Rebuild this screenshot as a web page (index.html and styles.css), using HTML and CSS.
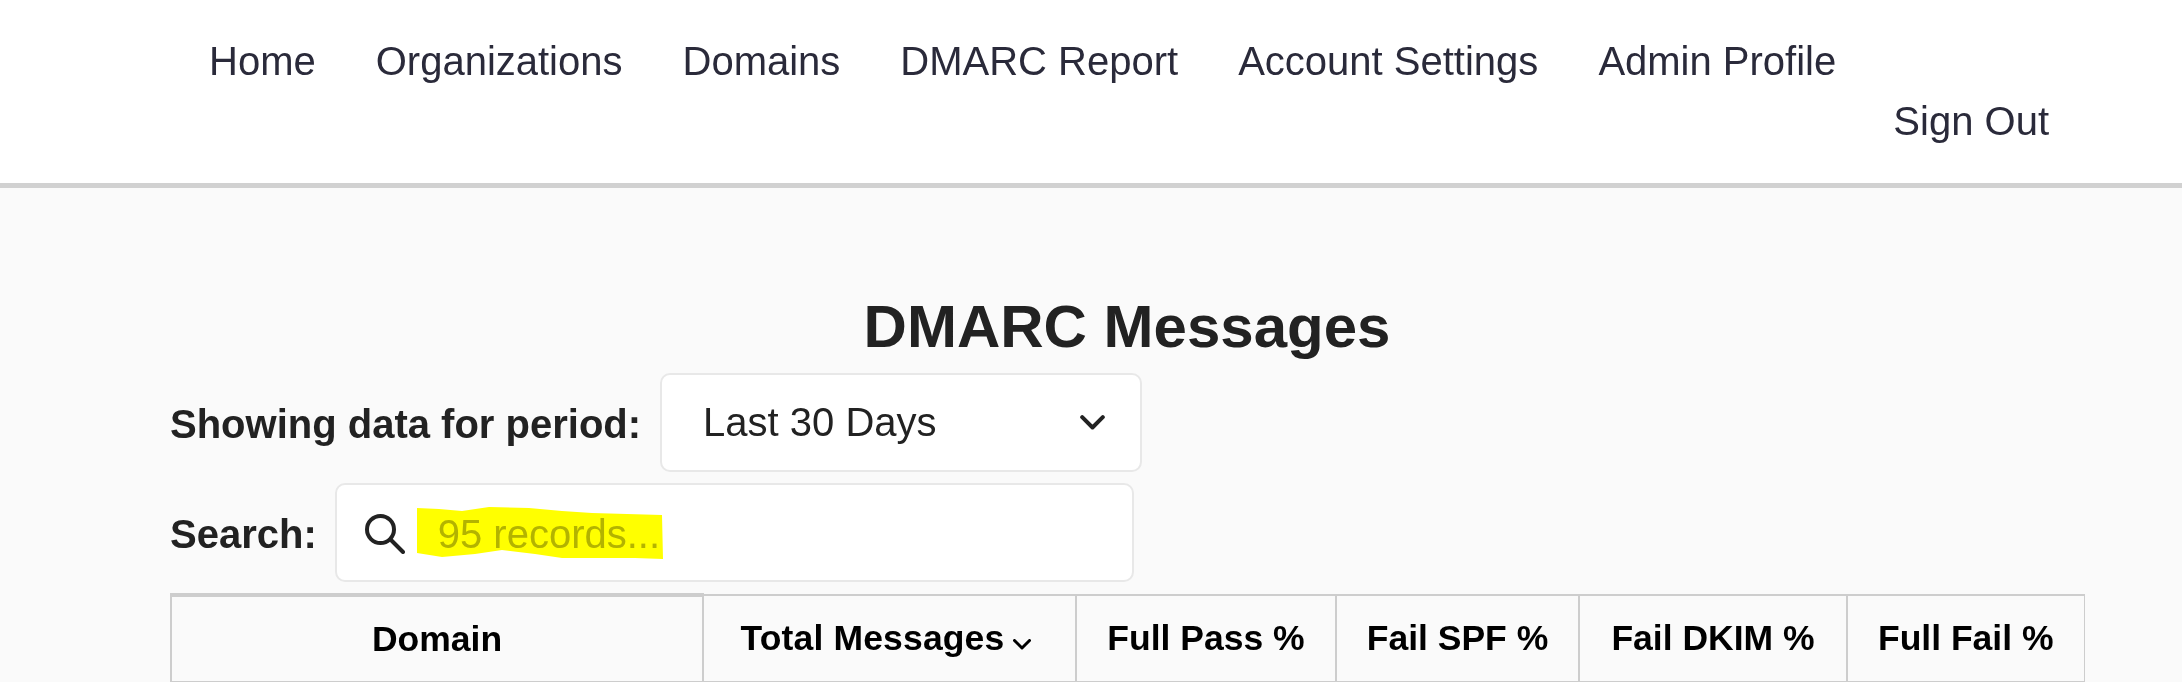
FILE: index.html
```html
<!DOCTYPE html>
<html lang="en">
<head>
<meta charset="utf-8">
<title>DMARC Messages</title>
<link rel="stylesheet" href="styles.css">
</head>
<body>
<header class="site-header">
  <nav>
    <ul class="nav-list">
      <li><a href="#">Home</a></li>
      <li><a href="#">Organizations</a></li>
      <li><a href="#">Domains</a></li>
      <li><a href="#">DMARC Report</a></li>
      <li><a href="#">Account Settings</a></li>
      <li><a href="#">Admin Profile</a></li>
      <li class="nav-signout"><a href="#">Sign Out</a></li>
    </ul>
  </nav>
</header>
<main class="content">
  <h1 class="title">DMARC Messages</h1>
  <div class="filter-row">
    <span class="filter-label">Showing data for period:</span>
    <div class="field field-period">
      <span>Last 30 Days</span>
      <svg class="chevron" viewBox="0 0 25 15" width="25" height="15" aria-hidden="true"><path d="M2.2 2.2 12.5 12.5 22.8 2.2" fill="none" stroke="#222" stroke-width="4" stroke-linecap="round" stroke-linejoin="round"/></svg>
    </div>
  </div>
  <div class="filter-row search-row">
    <span class="filter-label">Search:</span>
    <div class="field field-search">
      <svg class="search-icon" viewBox="0 0 40 40" width="40" height="40" aria-hidden="true"><circle cx="15.5" cy="15.5" r="13.5" fill="none" stroke="#222" stroke-width="4"/><path d="M25.5 25.5 38 38" fill="none" stroke="#222" stroke-width="4" stroke-linecap="round"/></svg>
      <span class="placeholder">95 records...</span>
      <svg class="highlight" viewBox="0 0 246 52" width="246" height="52" aria-hidden="true"><polygon points="0,1 22,2 45,4 72,0 112,1 145,4 175,6 245,8 246,52 218,51 178,51 145,51 118,47 85,43 58,47 25,50 0,46" fill="#ffff00"/></svg>
    </div>
  </div>
  <table class="report">
    <thead>
      <tr>
        <th class="col-domain">Domain</th>
        <th class="col-total">Total Messages <svg class="sort" viewBox="0 0 18 11" width="18" height="11" aria-hidden="true"><path d="M1.5 1.5 9 9 16.5 1.5" fill="none" stroke="#000" stroke-width="3" stroke-linecap="round" stroke-linejoin="round"/></svg></th>
        <th class="col-pass">Full Pass %</th>
        <th class="col-spf">Fail SPF %</th>
        <th class="col-dkim">Fail DKIM %</th>
        <th class="col-fail">Full Fail %</th>
      </tr>
    </thead>
  </table>
</main>
</body>
</html>
```

FILE: styles.css
```css
* { box-sizing: border-box; }
html, body { margin: 0; padding: 0; }
body {
  background: #fafafa;
  color: #222;
  font-family: "Liberation Sans", Arial, sans-serif;
  overflow: hidden;
}
.site-header {
  background: #fff;
  border-bottom: 5px solid #d1d1d1;
  height: 188px;
  padding: 31px 133px 0 209px;
}
.nav-list {
  list-style: none;
  margin: 0;
  padding: 0;
  display: flex;
  flex-wrap: wrap;
  column-gap: 60px;
  font-size: 40px;
  line-height: 60px;
}
.nav-list a { color: #2a2a3a; text-decoration: none; }
.nav-signout { margin-left: auto; }
.content { padding: 104px 98px 0 170px; }
.title {
  margin: 0 0 12px;
  font-size: 60px;
  line-height: 69px;
  font-weight: 700;
  text-align: center;
}
.filter-row { display: flex; align-items: center; gap: 19px; height: 99px; }
.search-row { margin-top: 11px; gap: 18px; }
.filter-label { font-size: 40px; font-weight: 700; padding-top: 3px; }
.field {
  position: relative;
  display: flex;
  align-items: center;
  height: 99px;
  background: #fff;
  border: 2px solid #e8e8e8;
  border-radius: 10px;
  font-size: 40px;
}
.field-period { width: 482px; padding: 0 35px 0 41px; justify-content: space-between; }
.field-search { width: 799px; padding-left: 28px; gap: 33px; }
.search-icon { margin-top: 3px; }
.placeholder { color: #b3b3b3; padding-top: 4px; }
.highlight {
  position: absolute;
  left: 80px;
  top: 22px;
  mix-blend-mode: multiply;
}
.report {
  margin-top: 11px;
  width: 1913px;
  table-layout: fixed;
  border-collapse: collapse;
}
.report th {
  height: 87px;
  padding: 0;
  border: 2px solid #cdcdcd;
  font-size: 35.5px;
  font-weight: 700;
  color: #000;
  text-align: center;
  vertical-align: middle;
}
.report .col-domain { width: 532px; border-top-width: 4px; }
.report .col-total { width: 373px; padding-right: 7px; letter-spacing: 0.15px; }
.col-pass { width: 260px; }
.col-spf { width: 243px; }
.col-dkim { width: 268px; }
.report .col-fail { width: 237px; border-right-width: 1px; }
.sort { margin-left: -1px; vertical-align: 0; }
```
